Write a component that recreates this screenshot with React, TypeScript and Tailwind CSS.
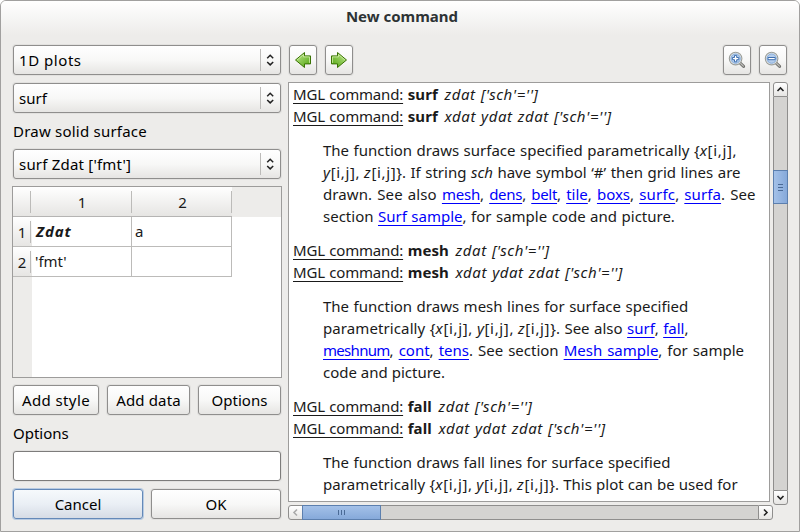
import type { ReactNode } from "react";

const face =
  "rounded-[3px] border border-[#8f8e8d] bg-gradient-to-b from-white via-[#f8f8f7] to-[#e6e5e3] shadow-[0_0_0_1px_#e2e1df]";

function Combo({ label, className = "" }: { label: string; className?: string }) {
  return (
    <div className={`flex h-[30px] w-[268px] shrink-0 items-center ${face}`}>
      <span className={`grow pl-[5px] ${className}`}>{label}</span>
      <span className="h-[22px] w-px bg-[#bcbbb9]" />
      <svg width="19" height="28" viewBox="0 0 19 28" fill="none" stroke="#222" strokeWidth="1.5">
        <path d="M6.2 12.2 9.2 9.3 12.2 12.2M6.2 16 9.2 18.9 12.2 16" />
      </svg>
    </div>
  );
}

function Button({ children, className }: { children: ReactNode; className: string }) {
  return (
    <button type="button" className={`flex h-[30px] items-center justify-center whitespace-nowrap ${face} ${className}`}>
      {children}
    </button>
  );
}

function ArrowIcon({ flip }: { flip?: boolean }) {
  return (
    <svg width="18" height="18" viewBox="0 0 18 18" className={flip ? "-scale-x-100" : ""}>
      <defs>
        <linearGradient id="leaf" x1="0" y1="0" x2="1" y2="1">
          <stop offset="0" stopColor="#c3ea92" />
          <stop offset="1" stopColor="#4ea30c" />
        </linearGradient>
      </defs>
      <path d="M1.5 9 10.5 1.5V4.9H16.5V12.9H10.5V16.5Z" fill="url(#leaf)" stroke="#3a7304" strokeLinejoin="round" />
      <path d="M3 9 9.5 3.6V5.9H15.5V11.9" fill="none" stroke="#d0eda8" strokeWidth=".8" />
    </svg>
  );
}

function ZoomIcon({ plus }: { plus?: boolean }) {
  return (
    <svg width="18" height="18" viewBox="0 0 18 18">
      <path d="m12.2 12.2 3.4 3.2" stroke="#6f6f6c" strokeWidth="3" strokeLinecap="round" />
      <path d="m12.4 12.2 3 2.9" stroke="#c0c0bc" strokeWidth="1.2" strokeLinecap="round" />
      <circle cx="7.6" cy="7.6" r="6.3" fill="#eef0ee" stroke="#9a9d99" strokeWidth="1.1" />
      <circle cx="7.6" cy="7.6" r="4.7" fill="#b4cdec" stroke="#7ba3d6" strokeWidth=".9" />
      <path
        d={plus ? "M6.5 4.4h2.2v2.1h2.1v2.2H8.7v2.1H6.5V8.7H4.4V6.5h2.1Z" : "M4 6.5h7.2v2.2H4Z"}
        fill="#fff"
        stroke="#3f70b0"
        strokeWidth="1"
      />
    </svg>
  );
}

function Line({ children, className = "" }: { children: ReactNode; className?: string }) {
  return <div className={`h-[22px] whitespace-nowrap ${className}`}>{children}</div>;
}

function Link({ children, className = "" }: { children: ReactNode; className?: string }) {
  return (
    <a className={`text-[#0000fa] underline decoration-1 underline-offset-[3px] [text-decoration-skip-ink:none] ${className}`}>
      {children}
    </a>
  );
}

function Command({ name, args }: { name: string; args: string }) {
  return (
    <Line className="[word-spacing:0.7px]">
      <span className="tracking-[-0.18px] underline decoration-1 underline-offset-[3px] [text-decoration-skip-ink:none]">
        MGL command:
      </span>{" "}
      <b className="tracking-[0.1px]">{name}</b>{" "}
      <i className="ml-0.5 tracking-[0.57px]">{args} ['sch'='']</i>
    </Line>
  );
}

function Section({ name, children }: { name: string; children: ReactNode }) {
  return (
    <section className="mb-3">
      <Command name={name} args="zdat" />
      <Command name={name} args="xdat ydat zdat" />
      <div className="mt-3 pl-[30px] [word-spacing:0.6px]">{children}</div>
    </section>
  );
}

const V = ({ n }: { n: string }) => (
  <span className="tracking-[0.65px]">
    <i>{n}</i>[i,j]
  </span>
);

function ScrollButton({ d, className, stroke = "#222" }: { d: string; className: string; stroke?: string }) {
  return (
    <div className={`flex h-[15px] w-[15px] shrink-0 items-center justify-center border border-[#8f8e8d] bg-gradient-to-b from-white to-[#e6e5e3] ${className}`}>
      <svg width="9" height="9" viewBox="0 0 9 9" fill="none" stroke={stroke} strokeWidth="1.6" className="shrink-0">
        <path d={d} />
      </svg>
    </div>
  );
}

export default function App() {
  return (
    <div className="h-[532px] w-[800px] overflow-hidden bg-white font-['Noto_Sans',sans-serif] text-[15px] leading-[22px] text-black">
      <div className="flex h-full flex-col rounded-t-[6px] border border-[#a1a09f] bg-[#edecea]">
        <header className="flex h-[34px] shrink-0 items-center justify-center rounded-t-[5px] bg-gradient-to-b from-white to-[#edecea] pb-1 pl-1 text-[15px] font-bold text-[#2d3335]">
          New command
        </header>
        <div className="flex grow pt-2.5">
          <div className="ml-3 flex w-[268px] shrink-0 flex-col">
            <Combo label="1D plots" className="tracking-[0.55px]" />
            <div className="h-2" />
            <Combo label="surf" />
            <div className="my-[7px] h-[22px] tracking-[0.22px]">Draw solid surface</div>
            <Combo label="surf Zdat ['fmt']" className="tracking-[0.2px]" />
            <div className="-mx-px mt-[7px] h-[192px] shrink-0 border border-[#9d9c9b] bg-white text-[#1a1a1a]">
              <div className="flex h-[30px] bg-[#edecea]">
                <div className="flex w-[219px] border-b border-[#b5b4b3] bg-gradient-to-b from-white to-[#e6e5e3]">
                  <div className="mb-[3px] mt-[4px] w-[18px] border-r border-[#bcbbb9]" />
                  <div className="mb-[3px] mt-[4px] w-[101px] border-r border-[#bcbbb9] pl-0.5 text-center">1</div>
                  <div className="mb-[3px] mt-[4px] w-[100px] border-r border-[#bcbbb9] pl-0.5 text-center">2</div>
                </div>
              </div>
              <div className="flex h-[160px]">
                <div className="w-[19px] bg-[#edecea]">
                  <div className="flex h-[30px] items-center border-b border-[#bcbbb9] bg-gradient-to-b from-white to-[#e6e5e3]">
                    <span className="w-[18px] border-r border-[#bcbbb9] pl-px text-center">1</span>
                  </div>
                  <div className="flex h-[30px] items-center border-b border-[#bcbbb9] bg-gradient-to-b from-white to-[#e6e5e3]">
                    <span className="w-[18px] border-r border-[#bcbbb9] pl-px text-center">2</span>
                  </div>
                </div>
                <div className="grid h-[60px] w-[200px] grid-cols-2 grid-rows-2">
                  <div className="border-b border-r border-[#bcbbb9] pl-1 pt-[3px] font-bold italic tracking-[0.9px]">Zdat</div>
                  <div className="border-b border-r border-[#bcbbb9] pl-[3px] pt-[3px]">a</div>
                  <div className="border-b border-r border-[#bcbbb9] pl-[3px] pt-[3px]">'fmt'</div>
                  <div className="border-b border-r border-[#bcbbb9]" />
                </div>
              </div>
            </div>
            <div className="mt-[7px] flex justify-between">
              <Button className="w-[86px] tracking-[0.4px]">Add style</Button>
              <Button className="w-[83px] tracking-[0.15px]">Add data</Button>
              <Button className="w-[83px]">Options</Button>
            </div>
            <div className="my-[7px] h-[22px]">Options</div>
            <input className="h-[30px] w-full rounded-[3px] border border-[#7d7c7b] bg-white shadow-[0_0_0_1px_#e2e1df]" />
            <div className="mt-2 flex justify-between">
              <button
                type="button"
                className="flex h-[30px] w-[130px] items-center justify-center rounded-[3px] border border-[#6489b8] bg-gradient-to-b from-[#f6f9fc] via-[#eaeff5] to-[#d6dce5] shadow-[0_0_0_1px_#b8cbe2]"
              >
                Cancel
              </button>
              <Button className="w-[130px]">OK</Button>
            </div>
          </div>

          <div className="ml-[7px] flex w-[500px] shrink-0 flex-col">
            <div className="flex gap-2 pl-px">
              <Button className="w-7">
                <ArrowIcon />
              </Button>
              <Button className="w-7">
                <ArrowIcon flip />
              </Button>
              <div className="w-[354px]" />
              <Button className="w-7">
                <ZoomIcon plus />
              </Button>
              <Button className="w-7">
                <ZoomIcon />
              </Button>
            </div>
            <div className="mt-[7px] flex h-[423px]">
              <div className="h-[420px] w-[482px] overflow-hidden border border-[#9d9c9b] bg-white pl-1 text-[#1a1a1a]">
                <Section name="surf">
                  <Line>The function draws surface specified <span className="tracking-[0.1px]">parametrically</span> {"{"}<V n="x" />,</Line>
                  <Line><V n="y" />, <V n="z" />{"}"}. If string <i>sch</i> have symbol ‘#’ then grid lines are</Line>
                  <Line className="[word-spacing:1.2px]">
                    <span className="tracking-[0.08px]">drawn. See also </span>
                    <Link className="tracking-[-0.2px]">mesh</Link>, <Link className="tracking-[-0.3px]">dens</Link>,{" "}
                    <Link className="tracking-[-0.3px]">belt</Link>, <Link>tile</Link>, <Link>boxs</Link>,{" "}
                    <Link className="tracking-[0.2px]">surfc</Link>, <Link className="tracking-[0.1px]">surfa</Link>. See
                  </Line>
                  <Line>section <Link>Surf sample</Link>, for sample code and picture.</Line>
                </Section>
                <Section name="mesh">
                  <Line>The function draws mesh lines for surface specified</Line>
                  <Line>
                    <span className="tracking-[0.1px]">parametrically</span> {"{"}<V n="x" />, <V n="y" />, <V n="z" />{"}"}. See also <Link>surf</Link>, <Link>fall</Link>,
                  </Line>
                  <Line className="[word-spacing:1.1px]">
                    <Link className="tracking-[-0.7px]">meshnum</Link>, <Link>cont</Link>, <Link>tens</Link>. See section <Link>Mesh sample</Link>, for sample
                  </Line>
                  <Line className="[word-spacing:0px]">code and picture.</Line>
                </Section>
                <Section name="fall">
                  <Line>The function draws fall lines for surface specified</Line>
                  <Line className="[word-spacing:0.3px]">
                    <span className="tracking-[0.1px]">parametrically</span> {"{"}<V n="x" />, <V n="y" />, <V n="z" />{"}"}. This plot can be used for
                  </Line>
                </Section>
              </div>
              <div className="ml-[3px] flex w-[15px] flex-col">
                <ScrollButton className="rounded-t-[3px]" d="M1.5 6 4.5 3 7.5 6" />
                <div className="h-[73px] border-x border-[#8f8e8d] bg-[#d4d3d1]" />
                <div className="flex h-[34px] flex-col items-center justify-center gap-[2px] border border-[#5c7fae] bg-gradient-to-r from-[#a4c1e8] to-[#86a9da]">
                  <span className="h-px w-[5px] bg-[#4a6a96]" />
                  <span className="h-px w-[5px] bg-[#4a6a96]" />
                  <span className="h-px w-[5px] bg-[#4a6a96]" />
                </div>
                <div className="grow border-x border-[#8f8e8d] bg-[#d4d3d1]" />
                <ScrollButton className="rounded-b-[3px]" d="M1.5 3 4.5 6 7.5 3" />
              </div>
            </div>
            <div className="flex w-[485px]">
              <ScrollButton className="rounded-l-[3px]" stroke="#aaa" d="M6 1.5 3 4.5 6 7.5" />
              <div className="-ml-px flex h-[15px] w-[79px] items-center justify-center gap-[2px] border border-[#5c7fae] bg-gradient-to-b from-[#a4c1e8] to-[#86a9da]">
                <span className="h-[5px] w-px bg-[#4a6a96]" />
                <span className="h-[5px] w-px bg-[#4a6a96]" />
                <span className="h-[5px] w-px bg-[#4a6a96]" />
              </div>
              <div className="grow border-y border-[#8f8e8d] bg-[#d4d3d1]" />
              <ScrollButton className="rounded-r-[3px]" d="M3 1.5 6 4.5 3 7.5" />
            </div>
          </div>
        </div>
      </div>
    </div>
  );
}
